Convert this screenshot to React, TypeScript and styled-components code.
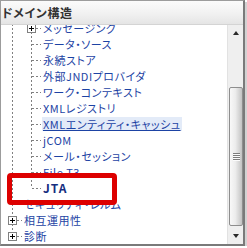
import React, { useLayoutEffect, useRef } from 'react';
import styled, { createGlobalStyle, css } from 'styled-components';

type JointKind = 'pipe' | 'tee' | 'elbow' | 'blank';

interface ITreeNode {
  label: string;
  joints: JointKind[];
  box?: 'plus' | 'minus';
  selected?: boolean;
  current?: boolean;
}

const ROW_HEIGHT = 16;
// rows of the tree that lie above the visible part (base_domain, 環境, デプロイメント, サービス)
const ROWS_ABOVE = 4;
const SCROLL_OFFSET = 5;
const VIEW_HEIGHT = 219;
const TRACK_HEIGHT = 187;

const nodes: ITreeNode[] = [
  { label: 'メッセージング', joints: ['pipe', 'tee'], box: 'plus' },
  { label: 'データ・ソース', joints: ['pipe', 'tee'] },
  { label: '永続ストア', joints: ['pipe', 'tee'] },
  { label: '外部JNDIプロバイダ', joints: ['pipe', 'tee'] },
  { label: 'ワーク・コンテキスト', joints: ['pipe', 'tee'] },
  { label: 'XMLレジストリ', joints: ['pipe', 'tee'] },
  { label: 'XMLエンティティ・キャッシュ', joints: ['pipe', 'tee'], selected: true },
  { label: 'jCOM', joints: ['pipe', 'tee'] },
  { label: 'メール・セッション', joints: ['pipe', 'tee'] },
  { label: 'File T3', joints: ['pipe', 'tee'] },
  { label: 'JTA', joints: ['pipe', 'elbow'], current: true },
  { label: 'セキュリティ・レルム', joints: ['tee'] },
  { label: '相互運用性', joints: ['tee'], box: 'plus' },
  { label: '診断', joints: ['elbow'], box: 'plus' },
];

const GlobalStyle = createGlobalStyle`
  html, body {
    margin: 0;
    padding: 0;
    background: #ffffff;
  }
  body {
    font-family: 'Noto Sans CJK JP', 'Noto Sans', sans-serif;
  }
`;

const Panel = styled.div`
  position: relative;
  box-sizing: border-box;
  width: 245px;
  height: 246px;
  display: flex;
  flex-direction: column;
  background: #ffffff;
  border: 1px solid #9c9c9c;
  border-right: 2px solid #7a7a7a;
  border-bottom: 2px solid #7a7a7a;
  box-shadow: 2px 2px 0 #d2d2d2;
`;

const Header = styled.div`
  flex: none;
  height: 23px;
  display: flex;
  align-items: center;
  padding-left: 1px;
  background: linear-gradient(to bottom, #fbfbfb 0%, #f1f1f1 55%, #e5e5e5 100%);
  border-bottom: 1px solid #d4d4d4;
  font-size: 12px;
  font-weight: bold;
  color: #333333;
  font-feature-settings: 'palt';
  letter-spacing: 0.6px;
`;

const Body = styled.div`
  flex: 1;
  display: flex;
  min-height: 0;
`;

const Tree = styled.div`
  flex: 1;
  overflow: hidden;
`;

const Row = styled.div`
  display: flex;
  align-items: center;
  height: ${ROW_HEIGHT}px;
  padding-left: 2px;
  white-space: nowrap;
`;

const dashedV = css`
  background-image: linear-gradient(to bottom, #808080 2px, transparent 2px);
  background-size: 1px 4px;
`;

const dashedH = css`
  background-image: linear-gradient(to right, #808080 2px, transparent 2px);
  background-size: 4px 1px;
`;

const Joint = styled.span<{ $kind: JointKind }>`
  position: relative;
  flex: none;
  width: 19px;
  height: 100%;

  &::before {
    content: '';
    position: absolute;
    left: 9px;
    top: 0;
    width: 1px;
    height: ${(p) => (p.$kind === 'elbow' ? '8px' : '100%')};
    display: ${(p) => (p.$kind === 'blank' ? 'none' : 'block')};
    ${dashedV}
  }

  &::after {
    content: '';
    position: absolute;
    left: 10px;
    top: 8px;
    width: 9px;
    height: 1px;
    display: ${(p) => (p.$kind === 'tee' || p.$kind === 'elbow' ? 'block' : 'none')};
    ${dashedH}
  }
`;

const Expander = styled.span<{ $open: boolean }>`
  position: absolute;
  left: 5px;
  top: 4px;
  box-sizing: border-box;
  width: 9px;
  height: 9px;
  border: 1px solid #808080;
  background: #ffffff;
  z-index: 1;

  &::before {
    content: '';
    position: absolute;
    left: 1px;
    top: 3px;
    width: 5px;
    height: 1px;
    background: #000000;
  }

  &::after {
    content: '';
    position: absolute;
    left: 3px;
    top: 1px;
    width: 1px;
    height: 5px;
    background: #000000;
    display: ${(p) => (p.$open ? 'none' : 'block')};
  }
`;

const Label = styled.span<{ $selected?: boolean; $current?: boolean }>`
  margin-left: 1px;
  padding: 0 1px;
  font-size: 11px;
  line-height: 14px;
  letter-spacing: 0.5px;
  color: #1d43a4;
  font-feature-settings: 'palt';
  ${(p) =>
    p.$selected &&
    css`
      background: #e3ebf8;
      text-decoration: underline;
      text-underline-offset: 1px;
    `}
  ${(p) =>
    p.$current &&
    css`
      font-size: 12px;
      font-weight: bold;
      color: #152e80;
      letter-spacing: 1px;
    `}
`;

const ScrollBar = styled.div`
  flex: none;
  width: 15px;
  display: flex;
  flex-direction: column;
  background: #efefef;
  border-left: 1px solid #e2e2e2;
`;

const ArrowButton = styled.div<{ $dir: 'up' | 'down' }>`
  flex: none;
  height: 16px;
  display: flex;
  align-items: center;
  justify-content: center;

  &::before {
    content: '';
    width: 0;
    height: 0;
    border-left: 3.5px solid transparent;
    border-right: 3.5px solid transparent;
    ${(p) =>
      p.$dir === 'up'
        ? css`
            border-bottom: 4px solid #2a2a2a;
          `
        : css`
            border-top: 4px solid #2a2a2a;
          `}
  }
`;

const Track = styled.div`
  flex: 1;
  display: flex;
  flex-direction: column;
`;

const Thumb = styled.div`
  flex: none;
  box-sizing: border-box;
  margin-left: 1px;
  width: 14px;
  display: flex;
  align-items: center;
  justify-content: center;
  border: 1px solid #8e8e8e;
  border-radius: 2px;
  background: linear-gradient(to right, #f8f8f8 0%, #ececec 45%, #d2d2d2 80%, #c2c2c2 100%);
`;

const Grip = styled.span`
  width: 7px;
  height: 8px;
  background-image: linear-gradient(to bottom, #7d7d7d 1px, #fbfbfb 1px);
  background-size: 7px 2px;
`;

const Highlight = styled.div`
  position: absolute;
  left: 6px;
  top: 172px;
  box-sizing: border-box;
  width: 110px;
  height: 32px;
  border: 5px solid #dd0000;
  border-radius: 4px;
  pointer-events: none;
`;

const TreeRow = ({ node }: { node: ITreeNode }) => (
  <Row>
    {node.joints.map((kind, i) => (
      <Joint key={i} $kind={kind}>
        {node.box && i === node.joints.length - 1 && <Expander $open={node.box === 'minus'} />}
      </Joint>
    ))}
    <Label $selected={node.selected} $current={node.current}>
      {node.label}
    </Label>
  </Row>
);

const App = () => {
  const treeRef = useRef<HTMLDivElement>(null);

  useLayoutEffect(() => {
    if (treeRef.current) treeRef.current.scrollTop = SCROLL_OFFSET;
  }, []);

  const contentHeight = (nodes.length + ROWS_ABOVE) * ROW_HEIGHT;
  const scrolled = ROWS_ABOVE * ROW_HEIGHT + SCROLL_OFFSET;
  const thumbHeight = Math.round((TRACK_HEIGHT * VIEW_HEIGHT) / contentHeight) - 3;
  const thumbTop = Math.round((TRACK_HEIGHT * scrolled) / contentHeight) + 1;

  return (
    <>
      <GlobalStyle />
      <Panel>
        <Header>ドメイン構造</Header>
        <Body>
          <Tree ref={treeRef}>
            {nodes.map((node) => (
              <TreeRow key={node.label} node={node} />
            ))}
          </Tree>
          <ScrollBar>
            <ArrowButton $dir="up" />
            <Track>
              <div style={{ height: thumbTop, flex: 'none' }} />
              <Thumb style={{ height: thumbHeight }}>
                <Grip />
              </Thumb>
            </Track>
            <ArrowButton $dir="down" />
          </ScrollBar>
        </Body>
        <Highlight />
      </Panel>
    </>
  );
};

export default App;
